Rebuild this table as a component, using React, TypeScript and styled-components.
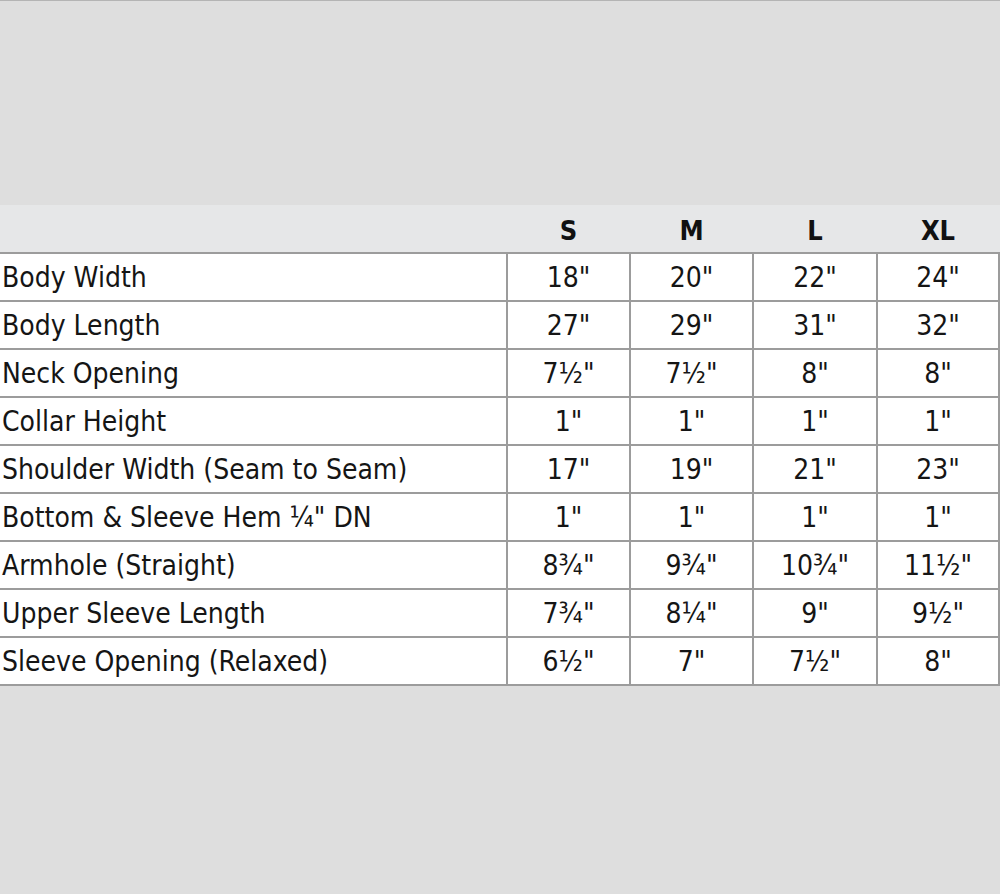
import React from "react";
import styled, { createGlobalStyle } from "styled-components";

const Global = createGlobalStyle`
  html, body { margin: 0; padding: 0; background: #dedede; }
  body { font-family: "DejaVu Sans Condensed", "DejaVu Sans", sans-serif; }
`;

const Page = styled.div`
  width: 1000px;
  height: 894px;
  background: #dedede;
  border-top: 1px solid #b4b4b4;
  box-sizing: border-box;
  padding-top: 204px;
`;

const Table = styled.div`
  width: 1000px;
  display: flex;
  flex-direction: column;
  border-bottom: 2px solid #9c9c9c;
`;

const cols = "506px 123px 123px 124px 122px";

const HeaderRow = styled.div`
  display: grid;
  grid-template-columns: ${cols} 2px;
  height: 47px;
  background: #e6e7e8;
  align-items: center;
`;

const HeadCell = styled.div`
  text-align: center;
  font-weight: bold;
  font-size: 27px;
  color: #111;
  padding-left: 2px;
  padding-top: 4px;
`;

const Row = styled.div`
  display: grid;
  grid-template-columns: ${cols};
  height: 46px;
  background: #fff;
  border-top: 2px solid #9c9c9c;
  border-right: 2px solid #9c9c9c;
`;

const Label = styled.div`
  display: flex;
  align-items: center;
  padding-left: 2px;
  font-size: 28px;
  color: #151515;
  white-space: nowrap;
`;

const Value = styled.div`
  display: flex;
  align-items: center;
  justify-content: center;
  border-left: 2px solid #9c9c9c;
  font-size: 28px;
  color: #151515;
  white-space: nowrap;
`;

const sizes = ["S", "M", "L", "XL"];

const rows: [string, string[]][] = [
  ["Body Width", ["18\"", "20\"", "22\"", "24\""]],
  ["Body Length", ["27\"", "29\"", "31\"", "32\""]],
  ["Neck Opening", ["7½\"", "7½\"", "8\"", "8\""]],
  ["Collar Height", ["1\"", "1\"", "1\"", "1\""]],
  ["Shoulder Width (Seam to Seam)", ["17\"", "19\"", "21\"", "23\""]],
  ["Bottom & Sleeve Hem ¼\" DN", ["1\"", "1\"", "1\"", "1\""]],
  ["Armhole (Straight)", ["8¾\"", "9¾\"", "10¾\"", "11½\""]],
  ["Upper Sleeve Length", ["7¾\"", "8¼\"", "9\"", "9½\""]],
  ["Sleeve Opening (Relaxed)", ["6½\"", "7\"", "7½\"", "8\""]],
];

export default function App() {
  return (
    <>
      <Global />
      <Page>
        <Table>
          <HeaderRow>
            <div />
            {sizes.map((s) => (
              <HeadCell key={s}>{s}</HeadCell>
            ))}
          </HeaderRow>
          {rows.map(([label, vals]) => (
            <Row key={label}>
              <Label>{label}</Label>
              {vals.map((v, i) => (
                <Value key={i}>{v}</Value>
              ))}
            </Row>
          ))}
        </Table>
      </Page>
    </>
  );
}
